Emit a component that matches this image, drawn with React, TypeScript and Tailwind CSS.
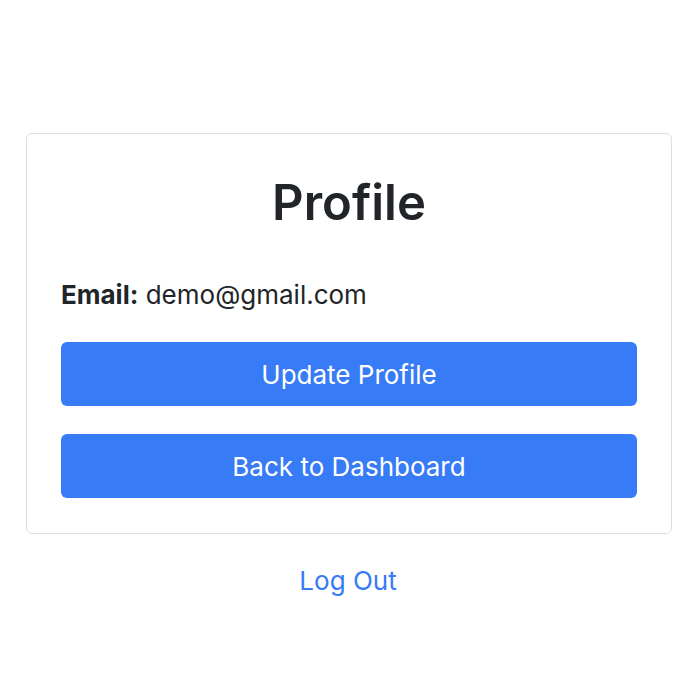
export default function App() {
  return (
    <div
      className="min-h-[698px] w-[696px] bg-white pt-[133px] text-[#212529]"
      style={{ fontFamily: "Inter, 'Noto Sans', sans-serif" }}
    >
      <div className="ml-[26px] w-[646px] rounded-[6px] border border-[#dfdfdf] px-[34px] pt-[40px] pb-[35px]">
        <h2 className="text-center text-[49px] leading-[58px] font-semibold">Profile</h2>
        <div className="mt-[43px] text-[26px] leading-[39px]">
          <strong className="font-bold">Email:</strong> demo@gmail.com
        </div>
        <button className="mt-[28px] h-[64px] w-full rounded-[6px] bg-[#377bf6] text-[26px] text-white">
          Update Profile
        </button>
        <button className="mt-[28px] h-[64px] w-full rounded-[6px] bg-[#377bf6] text-[26px] text-white">
          Back to Dashboard
        </button>
      </div>
      <div className="mt-[27px] text-center text-[26px] leading-[39px]">
        <a className="text-[#377bf6]">Log Out</a>
      </div>
    </div>
  );
}
